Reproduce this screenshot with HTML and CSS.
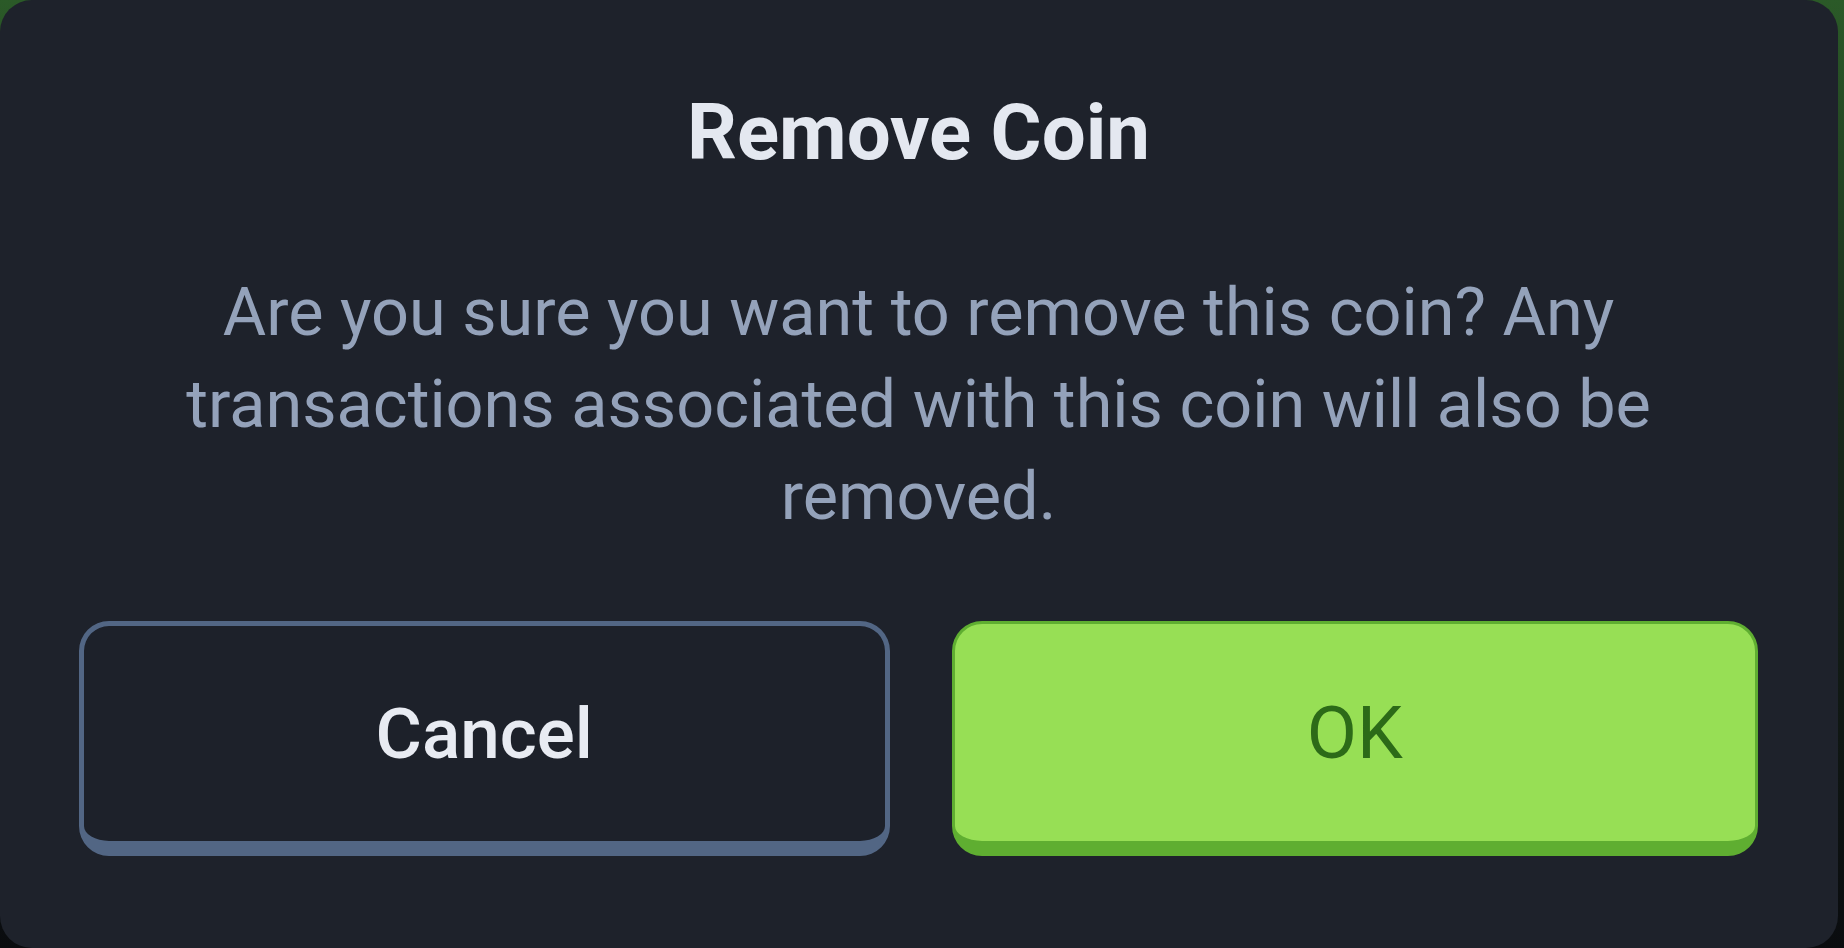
FILE: index.html
```html
<!DOCTYPE html>
<html>

<head>
	<meta http-equiv="Content-Type" content="text/html; charset=utf-8" />
	<title>Remove Coin</title>
	<link rel="stylesheet" href="styles.css">
</head>

<body>
	<div class="dialog">
		<h1 class="dialog-title">Remove Coin</h1>
		<p class="dialog-text">Are you sure you want to remove this coin? Any transactions associated with this coin will also be removed.</p>
		<div class="dialog-actions">
			<button class="btn btn-cancel" type="button">Cancel</button>
			<button class="btn btn-ok" type="button">OK</button>
		</div>
	</div>
</body>

</html>
```

FILE: styles.css
```css
html,
body,
h1,
p {
	margin: 0;
	padding: 0;
}

body {
	height: 948px;
	overflow: hidden;
	padding-right: 6px;
	background: linear-gradient(#2b5a28 0%, #1a2a1c 40%, #0a0c0f 100%);
	font-family: Roboto, "Liberation Sans", Arial, sans-serif;
}

.dialog {
	height: 948px;
	box-sizing: border-box;
	padding: 85px 80px 0 79px;
	background: #1e222b;
	border-radius: 32px;
	text-align: center;
}

.dialog-title {
	font-size: 78px;
	line-height: 95px;
	font-weight: 700;
	color: #e4e8f0;
}

.dialog-text {
	width: 1600px;
	margin: 86px auto 0;
	font-size: 66.6px;
	line-height: 92px;
	color: #94a2ba;
}

.dialog-actions {
	display: flex;
	gap: 62px;
	margin-top: 79px;
}

.btn {
	flex: 1;
	height: 235px;
	box-sizing: border-box;
	border-radius: 30px;
	border-style: solid;
	border-width: 5px 5px 15px;
	font-family: Roboto, "Liberation Sans", Arial, sans-serif;
	font-size: 71px;
	cursor: pointer;
}

.btn-cancel {
	background: #1d212a;
	border-color: #526684;
	color: #e8ebf2;
	font-weight: 500;
}

.btn-ok {
	background: #97df55;
	border-color: #5fae31;
	border-width: 3px 3px 15px;
	color: #2c6a18;
	font-size: 73px;
	font-weight: 400;
}
```
